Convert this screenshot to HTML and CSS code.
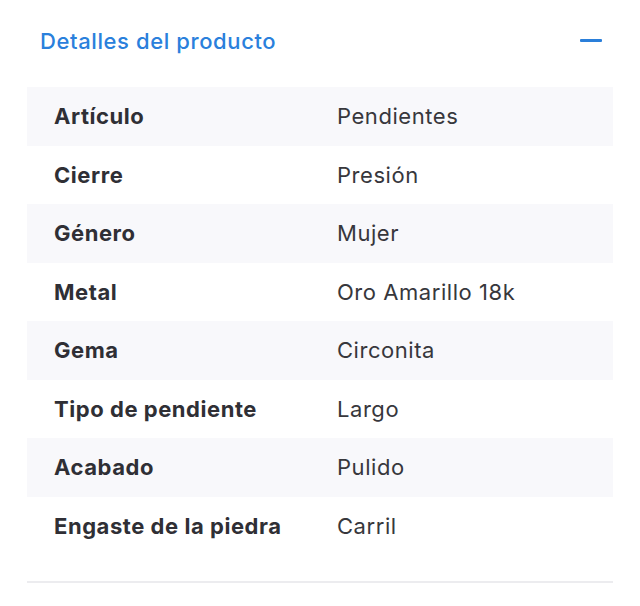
FILE: index.html
```html
<!DOCTYPE html>
<html lang="es">
<head>
  <meta charset="UTF-8">
  <title>Detalles del producto</title>
  <meta name="viewport" content="width=device-width, initial-scale=1.0">
  <link rel="stylesheet" href="styles.css">
</head>
<body>

  <section class="details">
    <div class="detailsHeader">
      <h3>Detalles del producto</h3>
      <span class="toggle"></span>
    </div>

    <table class="specs">
      <tr><th>Artículo</th><td>Pendientes</td></tr>
      <tr><th>Cierre</th><td>Presión</td></tr>
      <tr><th>Género</th><td>Mujer</td></tr>
      <tr><th>Metal</th><td>Oro Amarillo 18k</td></tr>
      <tr><th>Gema</th><td>Circonita</td></tr>
      <tr><th>Tipo de pendiente</th><td>Largo</td></tr>
      <tr><th>Acabado</th><td>Pulido</td></tr>
      <tr><th>Engaste de la piedra</th><td>Carril</td></tr>
    </table>
  </section>

</body>
</html>
```

FILE: styles.css
```css
* {
  box-sizing: border-box;
}
body {
  font-family: Inter, 'Noto Sans', sans-serif;
  background: #fff;
  color: #333338;
  margin: 0;
}

.details {
  margin: 0 27px;
  border-bottom: 2px solid #ececef;
  padding-bottom: 26px;
}

.detailsHeader {
  display: flex;
  align-items: center;
  justify-content: space-between;
  height: 87px;
  padding: 0 11px 6px 13px;
}

.detailsHeader h3 {
  margin: 0;
  font-size: 22px;
  font-weight: 500;
  letter-spacing: 0.6px;
  color: #2a80dc;
}

.toggle {
  width: 22px;
  height: 3px;
  background: #2a7fda;
  border-radius: 1px;
}

.specs {
  width: 100%;
  border-collapse: collapse;
}

.specs tr {
  height: 58.5px;
}

.specs tr:nth-child(odd) {
  background: #f8f8fb;
}

.specs th, .specs td {
  text-align: left;
  font-size: 22px;
  padding: 0;
}

.specs th {
  width: 310px;
  padding-left: 27px;
  font-weight: 700;
  letter-spacing: 0.55px;
  color: #2f2f35;
}

.specs td {
  font-weight: 400;
  letter-spacing: 0.55px;
  color: #37373c;
}
```
